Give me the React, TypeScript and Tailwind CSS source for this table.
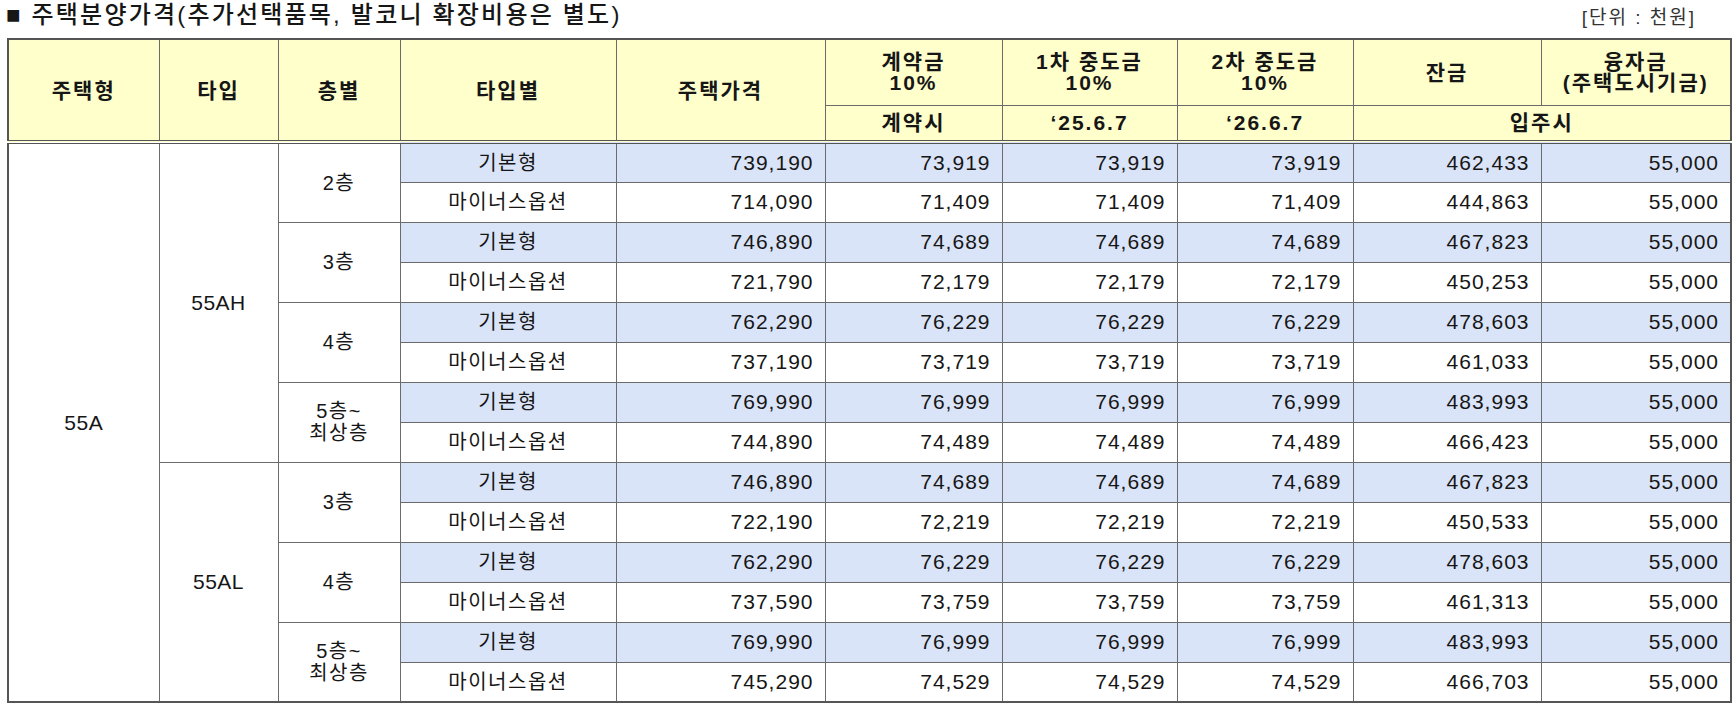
import React from "react";

type Row = { price: string; down: string; bal: string };
type Floor = { label: string[]; basic: Row; minus: Row };
type Group = { type: string; floors: Floor[] };

const groups: Group[] = [
  {
    type: "55AH",
    floors: [
      { label: ["2층"], basic: { price: "739,190", down: "73,919", bal: "462,433" }, minus: { price: "714,090", down: "71,409", bal: "444,863" } },
      { label: ["3층"], basic: { price: "746,890", down: "74,689", bal: "467,823" }, minus: { price: "721,790", down: "72,179", bal: "450,253" } },
      { label: ["4층"], basic: { price: "762,290", down: "76,229", bal: "478,603" }, minus: { price: "737,190", down: "73,719", bal: "461,033" } },
      { label: ["5층~", "최상층"], basic: { price: "769,990", down: "76,999", bal: "483,993" }, minus: { price: "744,890", down: "74,489", bal: "466,423" } },
    ],
  },
  {
    type: "55AL",
    floors: [
      { label: ["3층"], basic: { price: "746,890", down: "74,689", bal: "467,823" }, minus: { price: "722,190", down: "72,219", bal: "450,533" } },
      { label: ["4층"], basic: { price: "762,290", down: "76,229", bal: "478,603" }, minus: { price: "737,590", down: "73,759", bal: "461,313" } },
      { label: ["5층~", "최상층"], basic: { price: "769,990", down: "76,999", bal: "483,993" }, minus: { price: "745,290", down: "74,529", bal: "466,703" } },
    ],
  },
];

const cell = "border border-[#6b6b6b] p-0";
const kor = `${cell} text-center text-[20px] tracking-[1.5px]`;
const num = `${cell} text-right pr-[11px] text-[21px] tracking-[1px]`;
const th = "border border-[#6b6b6b] p-0 font-bold text-center text-[21px] tracking-[2px] leading-[21px]";
const thEnd = `${th} border-b-4 border-double border-b-[#555]`;

const PriceCells = ({ r }: { r: Row }) => (
  <>
    <td className={num}>{r.price}</td>
    <td className={num}>{r.down}</td>
    <td className={num}>{r.down}</td>
    <td className={num}>{r.down}</td>
    <td className={num}>{r.bal}</td>
    <td className={num}>55,000</td>
  </>
);

export default function App() {
  const total = groups.reduce((n, g) => n + g.floors.length * 2, 0);

  return (
    <div className="w-[1736px] h-[711px] bg-white text-[#161616] font-['Liberation_Sans','Noto_Sans_CJK_KR',sans-serif]">
      <div className="flex items-center justify-between h-[30px] pl-[6px] pr-[40px]">
        <h1 className="text-[24px] font-medium tracking-[2.2px]">■ 주택분양가격(추가선택품목, 발코니 확장비용은 별도)</h1>
        <span className="text-[19px] text-[#333] tracking-[2px] mt-[6px]">[단위 : 천원]</span>
      </div>

      <table className="ml-[7px] mt-[8px] w-[1723px] table-fixed border-collapse border-2 border-[#555]">
        <colgroup>
          <col className="w-[151px]" />
          <col className="w-[119px]" />
          <col className="w-[122px]" />
          <col className="w-[216px]" />
          <col className="w-[209px]" />
          <col className="w-[177px]" />
          <col className="w-[175px]" />
          <col className="w-[176px]" />
          <col className="w-[188px]" />
          <col className="w-[190px]" />
        </colgroup>
        <thead className="bg-[#ffffcc]">
          <tr className="h-[66px]">
            <th rowSpan={2} className={thEnd}>주택형</th>
            <th rowSpan={2} className={thEnd}>타입</th>
            <th rowSpan={2} className={thEnd}>층별</th>
            <th rowSpan={2} className={thEnd}>타입별</th>
            <th rowSpan={2} className={thEnd}>주택가격</th>
            <th className={th}>계약금<br />10%</th>
            <th className={th}>1차 중도금<br />10%</th>
            <th className={th}>2차 중도금<br />10%</th>
            <th className={th}>잔금</th>
            <th className={th}>융자금<br />(주택도시기금)</th>
          </tr>
          <tr className="h-[37px]">
            <th className={thEnd}>계약시</th>
            <th className={thEnd}>‘25.6.7</th>
            <th className={thEnd}>‘26.6.7</th>
            <th colSpan={2} className={thEnd}>입주시</th>
          </tr>
        </thead>
        <tbody>
          {groups.map((g, gi) =>
            g.floors.map((f, fi) => (
              <React.Fragment key={`${g.type}-${fi}`}>
                <tr className="h-[40px] bg-[#dae4f8]">
                  {gi === 0 && fi === 0 && (
                    <td rowSpan={total} className={`${cell} bg-white text-center text-[21px] tracking-[0.5px]`}>55A</td>
                  )}
                  {fi === 0 && (
                    <td rowSpan={g.floors.length * 2} className={`${cell} bg-white text-center text-[21px] tracking-[0.5px]`}>{g.type}</td>
                  )}
                  <td rowSpan={2} className={`${kor} bg-white leading-[22px]`}>
                    {f.label.map((l) => (
                      <div key={l}>{l}</div>
                    ))}
                  </td>
                  <td className={kor}>기본형</td>
                  <PriceCells r={f.basic} />
                </tr>
                <tr className="h-[40px] bg-white">
                  <td className={kor}>마이너스옵션</td>
                  <PriceCells r={f.minus} />
                </tr>
              </React.Fragment>
            ))
          )}
        </tbody>
      </table>
    </div>
  );
}
